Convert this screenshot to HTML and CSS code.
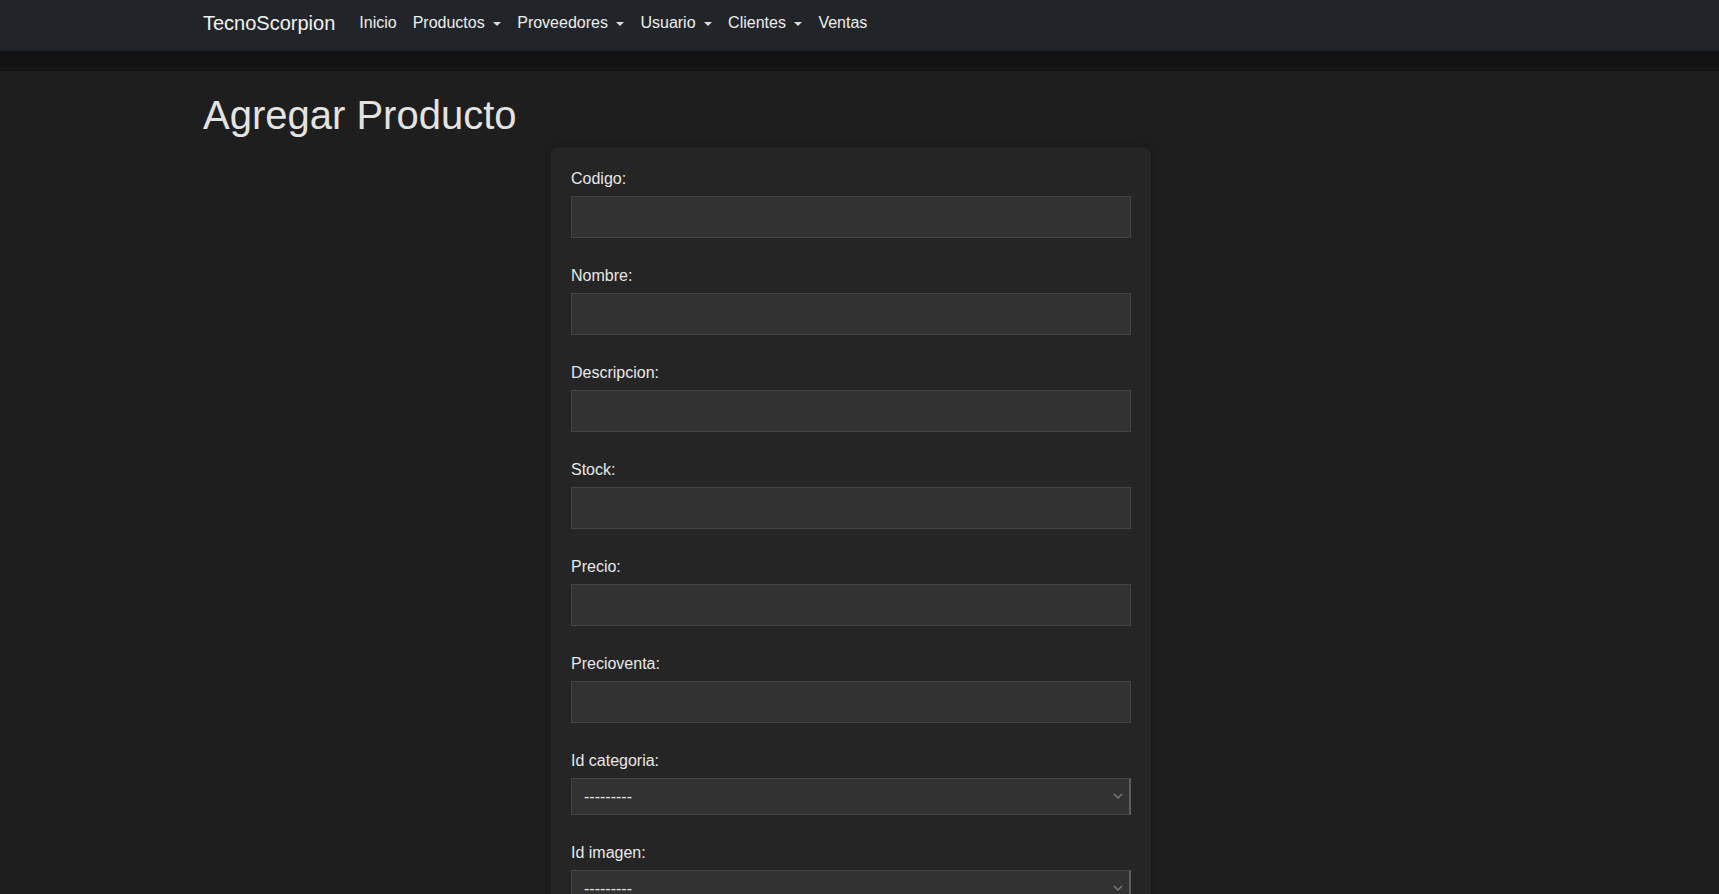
FILE: index.html
```html
<!DOCTYPE html>
<html lang="es">
<head>
<meta charset="utf-8">
<title>Agregar Producto</title>
<link rel="stylesheet" href="styles.css">
</head>
<body>
<nav class="navbar">
  <div class="nav-inner">
    <a class="brand" href="#">TecnoScorpion</a>
    <ul class="nav-links">
      <li><a class="nav-link" href="#">Inicio</a></li>
      <li><a class="nav-link dropdown" href="#">Productos</a></li>
      <li><a class="nav-link dropdown" href="#">Proveedores</a></li>
      <li><a class="nav-link dropdown" href="#">Usuario</a></li>
      <li><a class="nav-link dropdown" href="#">Clientes</a></li>
      <li><a class="nav-link" href="#">Ventas</a></li>
    </ul>
  </div>
</nav>
<div class="band"></div>
<main class="container">
  <h1 class="title">Agregar Producto</h1>
  <form class="card">
    <div class="field">
      <label for="codigo">Codigo:</label>
      <input id="codigo" type="text">
    </div>
    <div class="field">
      <label for="nombre">Nombre:</label>
      <input id="nombre" type="text">
    </div>
    <div class="field">
      <label for="descripcion">Descripcion:</label>
      <input id="descripcion" type="text">
    </div>
    <div class="field">
      <label for="stock">Stock:</label>
      <input id="stock" type="text">
    </div>
    <div class="field">
      <label for="precio">Precio:</label>
      <input id="precio" type="text">
    </div>
    <div class="field">
      <label for="precioventa">Precioventa:</label>
      <input id="precioventa" type="text">
    </div>
    <div class="field">
      <label for="categoria">Id categoria:</label>
      <div class="select-wrap">
        <select id="categoria"><option>---------</option></select>
        <svg class="chevron" width="10" height="6" viewBox="0 0 10 6"><path d="M1 1l4 4 4-4" fill="none" stroke="#7a7a7a" stroke-width="1.4"/></svg>
      </div>
    </div>
    <div class="field">
      <label for="imagen">Id imagen:</label>
      <div class="select-wrap">
        <select id="imagen"><option>---------</option></select>
        <svg class="chevron" width="10" height="6" viewBox="0 0 10 6"><path d="M1 1l4 4 4-4" fill="none" stroke="#7a7a7a" stroke-width="1.4"/></svg>
      </div>
    </div>
    <button class="btn" type="submit">Guardar</button>
  </form>
</main>
</body>
</html>
```

FILE: styles.css
```css
html {
  scrollbar-width: none;
}
html::-webkit-scrollbar {
  display: none;
}
body {
  margin: 0;
  background: #1e1e1e;
  color: #e4e4e4;
  font-family: "Liberation Sans", Arial, sans-serif;
  font-size: 16px;
  line-height: 1.5;
}
.navbar {
  background: #212529;
  height: 51px;
  box-sizing: border-box;
  padding-bottom: 5px;
  display: flex;
  align-items: center;
}
.nav-inner {
  width: 1313px;
  margin: 0 auto;
  display: flex;
  align-items: center;
}
.brand {
  color: #f2f2f2;
  font-size: 20px;
  line-height: 30px;
  text-decoration: none;
  margin-right: 16px;
}
.nav-links {
  list-style: none;
  margin: 0;
  padding: 0;
  display: flex;
}
.nav-link {
  display: flex;
  align-items: center;
  padding: 0 8px;
  color: #eeeeee;
  text-decoration: none;
  line-height: 24px;
}
.dropdown::after {
  content: "";
  display: inline-block;
  margin-left: 8.5px;
  border-top: 4.8px solid #dcdcdc;
  border-left: 4.8px solid transparent;
  border-right: 4.8px solid transparent;
  margin-top: 1px;
}
.band {
  height: 20px;
  background: #131313;
}
.container {
  width: 1313px;
  margin: 0 auto;
}
.title {
  margin: 20px 0 8px;
  font-size: 40px;
  font-weight: 400;
  line-height: 48px;
  color: #e3e3e3;
}
.card {
  width: 600px;
  box-sizing: border-box;
  margin-left: 348px;
  padding: 20px;
  background: #252525;
  border-radius: 8px;
  box-shadow: 0 0 10px rgba(0, 0, 0, 0.25);
}
.field {
  margin-bottom: 26px;
}
.field label {
  display: block;
  line-height: 24px;
  margin-bottom: 5px;
  color: #e8e8e8;
}
.field input {
  display: block;
  width: 100%;
  height: 42px;
  box-sizing: border-box;
  background: #323232;
  border: 1px solid #444444;
  color: #e4e4e4;
  font: inherit;
  padding: 0 12px;
  margin: 0;
}
.select-wrap {
  position: relative;
}
.select-wrap select {
  display: block;
  width: 100%;
  height: 37px;
  box-sizing: border-box;
  appearance: none;
  -webkit-appearance: none;
  background: #323232;
  border: 1px solid #444444;
  border-right: 2px solid #5e5e5e;
  border-radius: 0;
  color: #e4e4e4;
  font-family: "Liberation Sans", Arial, sans-serif;
  font-size: 16px;
  padding: 0 36px 0 12px;
  margin: 0;
}
.chevron {
  position: absolute;
  right: 8px;
  top: 15px;
}
.btn {
  background: #0d6efd;
  color: #fff;
  border: 0;
  border-radius: 6px;
  font: inherit;
  padding: 6px 12px;
}
```
